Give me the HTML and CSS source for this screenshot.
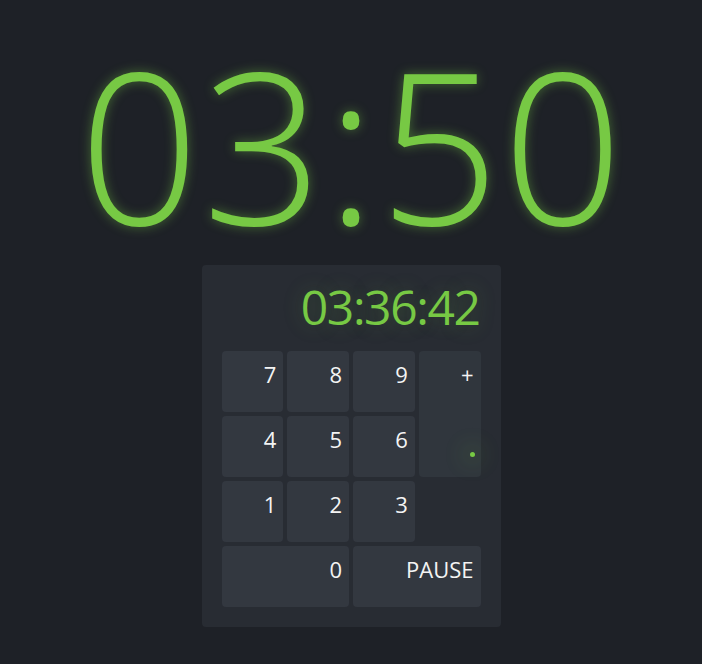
FILE: index.html
```html
<!DOCTYPE html>
<html>
<head>
<meta charset="utf-8">
<link rel="stylesheet" href="styles.css">
</head>
<body>
<main class="app">
  <div class="clock">03:50</div>
  <section class="panel">
    <div class="display">03:36:42</div>
    <div class="keys">
      <button class="key">7</button>
      <button class="key">8</button>
      <button class="key">9</button>
      <button class="key key-plus">+<span class="led"></span></button>
      <button class="key">4</button>
      <button class="key">5</button>
      <button class="key">6</button>
      <button class="key">1</button>
      <button class="key">2</button>
      <button class="key">3</button>
      <button class="key key-wide">0</button>
      <button class="key key-wide">PAUSE</button>
    </div>
  </section>
</main>
</body>
</html>
```

FILE: styles.css
```css
html, body {
  margin: 0;
  padding: 0;
  background: #1e2127;
  height: 100%;
}
body {
  font-family: "Open Sans", "Noto Sans", sans-serif;
  color: #f0f0f0;
}
.app {
  display: flex;
  flex-direction: column;
  align-items: center;
}
.clock {
  margin-top: 38px;
  padding-left: 3px;
  font-size: 211px;
  line-height: 211px;
  font-weight: 300;
  letter-spacing: 3px;
  color: #77c944;
  text-shadow: 0 0 12px rgba(119, 201, 68, 0.45);
}
.panel {
  margin-top: 16px;
  width: 259px;
  padding: 20px;
  background: #282c33;
  border-radius: 4px;
}
.display {
  text-align: right;
  font-size: 48px;
  line-height: 44px;
  letter-spacing: -1.4px;
  padding-right: 1px;
  margin-bottom: 22px;
  color: #77c944;
  text-shadow: 0 0 20px rgba(119, 201, 68, 0.25);
}
.keys {
  display: grid;
  grid-template-columns: repeat(4, 1fr);
  grid-auto-rows: 61px;
  gap: 4px;
}
.key {
  position: relative;
  border: 0;
  border-radius: 4px;
  background: #333840;
  color: #f4f4f4;
  font-family: inherit;
  font-size: 22px;
  line-height: 30px;
  text-align: right;
  padding: 8px 7px 0 0;
  display: flex;
  justify-content: flex-end;
  align-items: flex-start;
}
.key-plus {
  grid-column: 4;
  grid-row: 1 / span 2;
  background: #30363d;
}
.key-wide {
  grid-column: span 2;
}
.led {
  position: absolute;
  left: 51px;
  top: 101px;
  width: 5px;
  height: 5px;
  border-radius: 50%;
  background: #77c944;
  box-shadow: 0 0 20px 10px rgba(119, 201, 68, 0.08);
}
```
